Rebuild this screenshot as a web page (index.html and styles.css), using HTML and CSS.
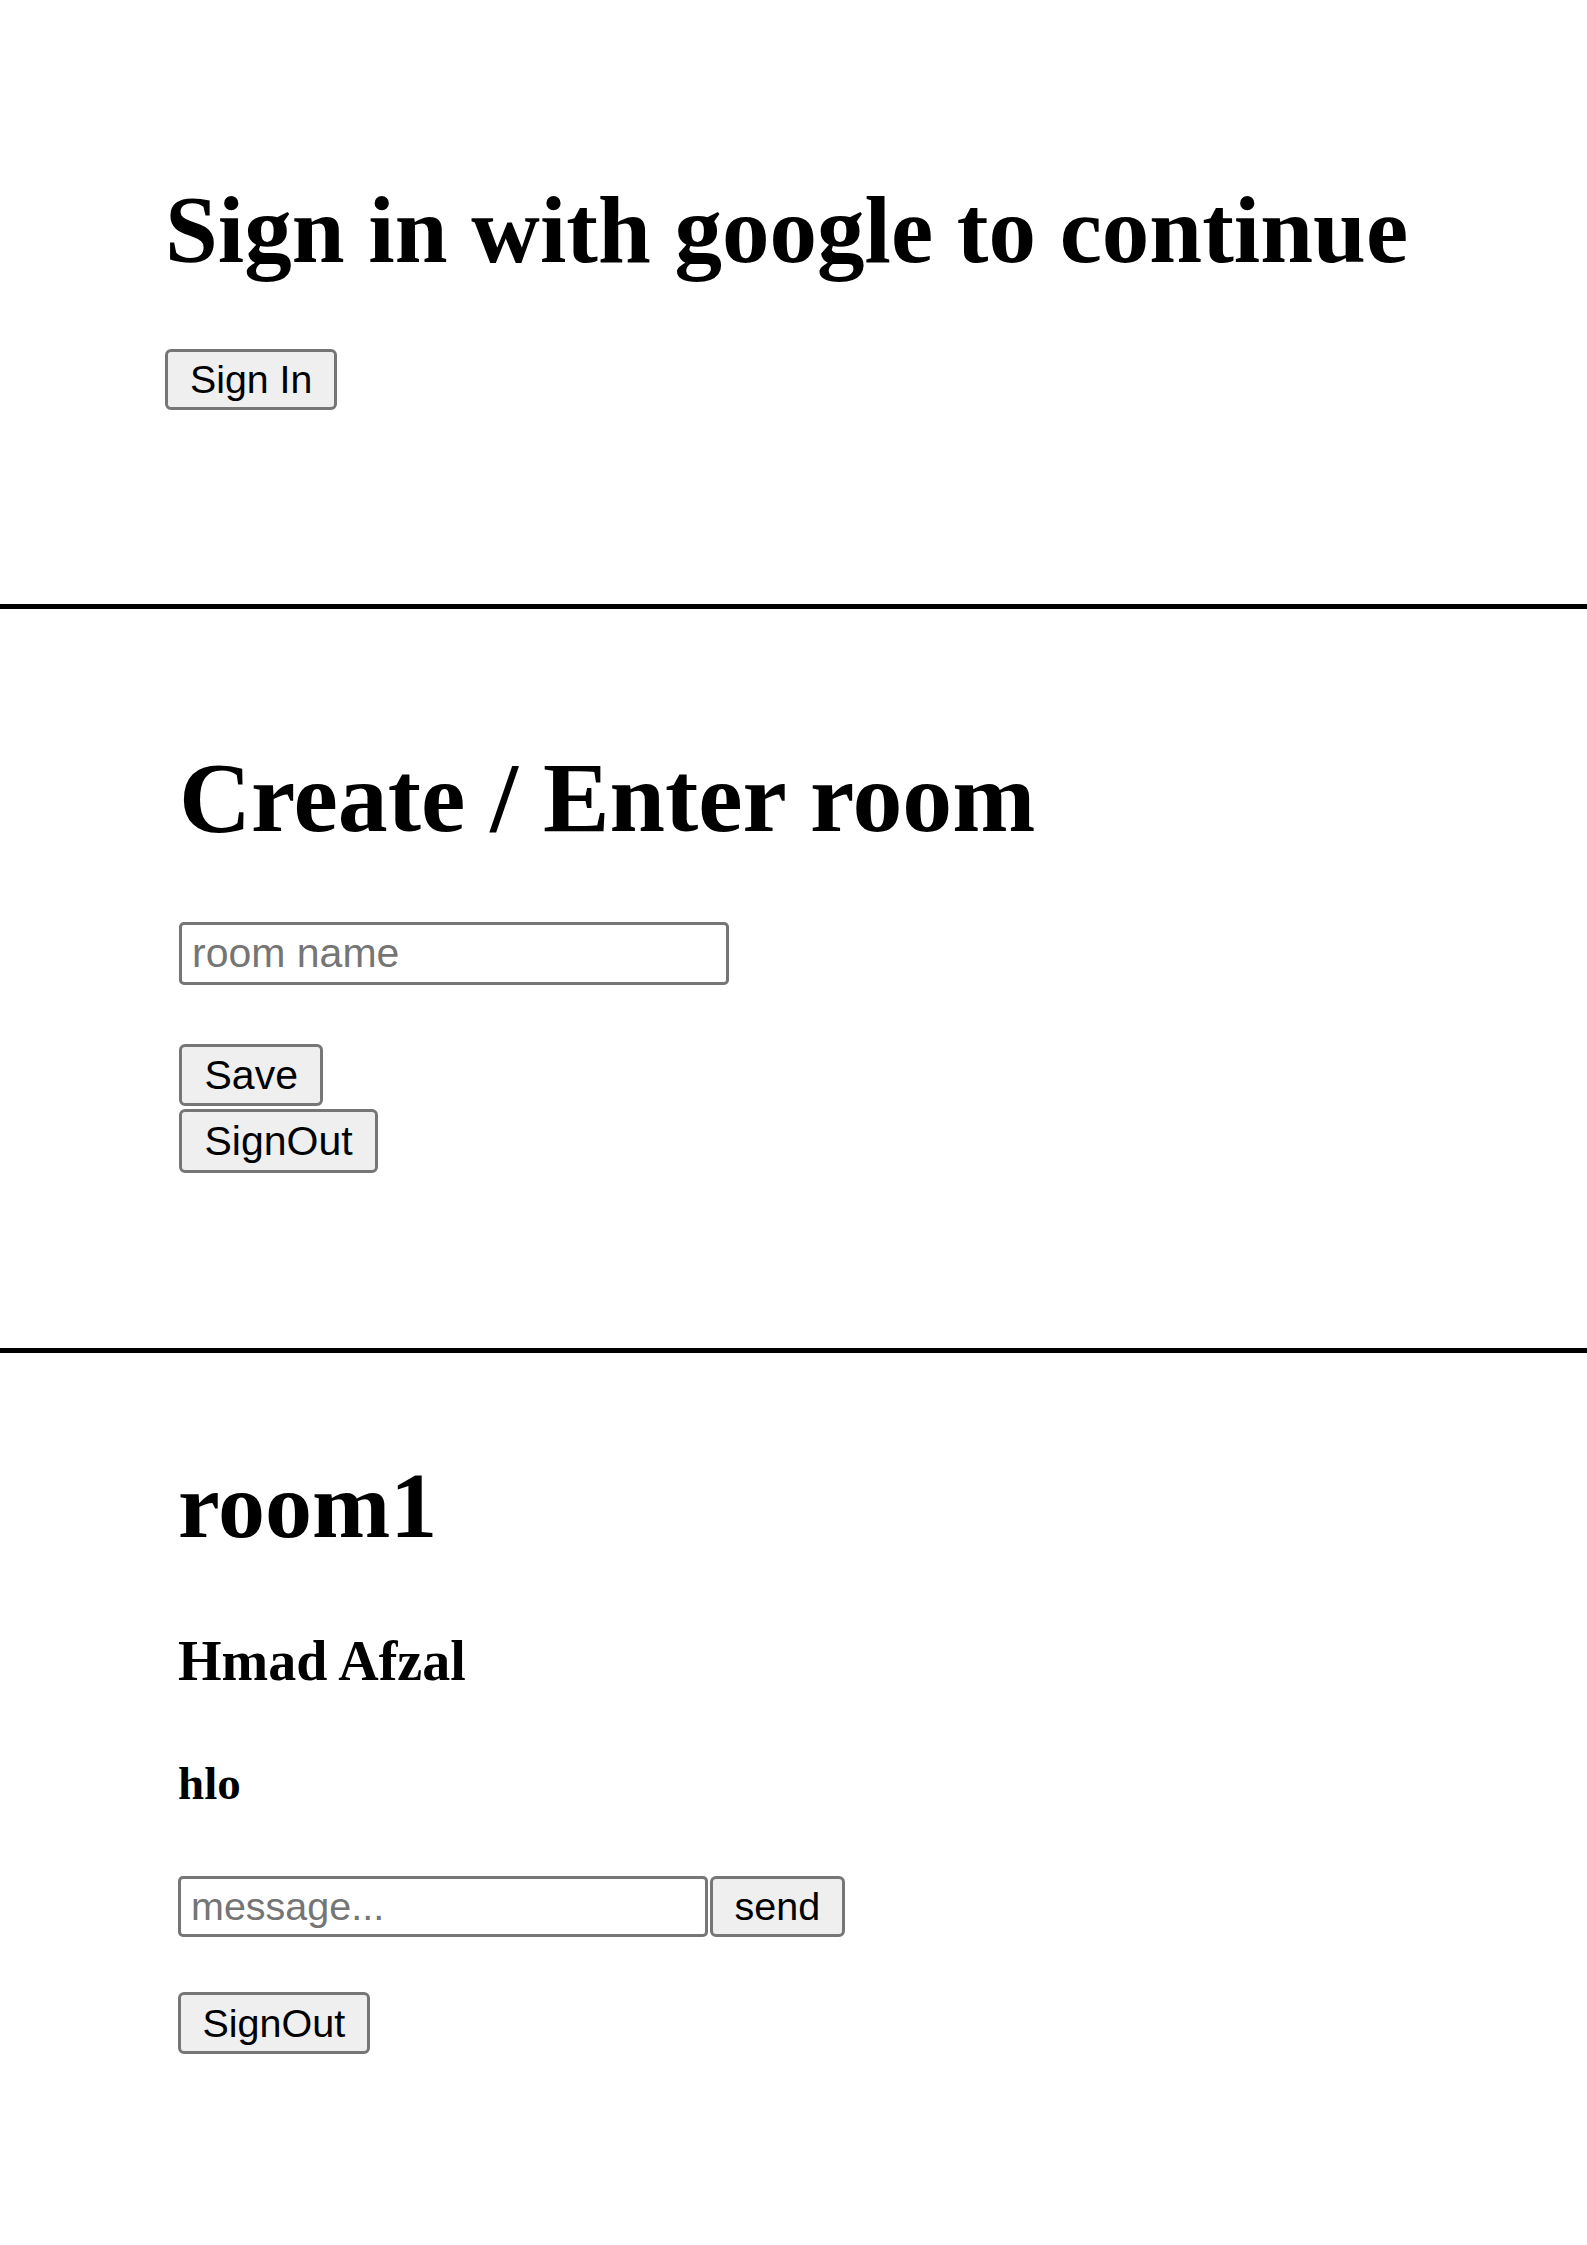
FILE: index.html
```html
<!DOCTYPE html>
<html lang="en">
<head>
<meta charset="utf-8">
<title>Chat rooms</title>
<link rel="stylesheet" href="styles.css">
</head>
<body>
  <section class="screen screen-signin">
    <h1 class="title title-signin">Sign in with google to continue</h1>
    <button class="btn btn-s1" type="button">Sign In</button>
  </section>

  <section class="screen screen-room">
    <h1 class="title title-room">Create / Enter room</h1>
    <input class="field field-room" type="text" placeholder="room name">
    <div class="stack">
      <button class="btn btn-s2 btn-save" type="button">Save</button>
      <button class="btn btn-s2 btn-out2" type="button">SignOut</button>
    </div>
  </section>

  <section class="screen screen-chat">
    <h1 class="title title-chat">room1</h1>
    <h3 class="sender">Hmad Afzal</h3>
    <h4 class="msg">hlo</h4>
    <div class="composer">
      <input class="field field-msg" type="text" placeholder="message..."><button class="btn btn-s3" type="button">send</button>
    </div>
    <button class="btn btn-s3 btn-out3" type="button">SignOut</button>
  </section>
</body>
</html>
```

FILE: styles.css
```css
html, body {
  margin: 0;
  padding: 0;
  background: #ffffff;
}

body {
  font-family: "Liberation Serif", "Times New Roman", serif;
  color: #000;
  min-height: 2245px;
}

.screen {
  display: flex;
  flex-direction: column;
  align-items: flex-start;
}

.title {
  margin: 0;
  font-weight: bold;
  color: #000;
}

/* ---- screen 1 ---- */
.screen-signin {
  padding: 176px 0 194px 165px;
  border-bottom: 5px solid #000;
}

.title-signin {
  font-size: 95px;
  line-height: 108px;
  margin-bottom: 65px;
}

/* ---- screen 2 ---- */
.screen-room {
  padding: 132px 0 175px 179px;
  border-bottom: 5px solid #000;
}

.title-room {
  font-size: 99.8px;
  line-height: 114px;
  margin-bottom: 67px;
}

.stack {
  display: flex;
  flex-direction: column;
  align-items: flex-start;
  gap: 3px;
  margin-top: 59px;
}

/* ---- screen 3 ---- */
.screen-chat {
  padding: 98px 0 0 178px;
}

.title-chat {
  font-size: 94px;
  line-height: 108px;
  margin-bottom: 70px;
}

.sender {
  margin: 0 0 63px;
  font-size: 56px;
  line-height: 64px;
  font-weight: bold;
}

.msg {
  margin: 0 0 66px;
  font-size: 47px;
  line-height: 54px;
  font-weight: bold;
}

.composer {
  display: flex;
  gap: 2px;
  margin-bottom: 55px;
}

/* ---- controls ---- */
.btn {
  box-sizing: border-box;
  font-family: "Liberation Sans", Arial, sans-serif;
  color: #000;
  background: #efefef;
  border: 3px solid #767676;
  border-radius: 6px;
  margin: 0;
  cursor: default;
}

.btn-s1 {
  font-size: 39.3px;
  height: 61px;
  padding: 0 22px;
}

.btn-s2 {
  font-size: 41px;
  padding: 0 22.5px;
}

.btn-save {
  height: 62px;
}

.btn-out2 {
  height: 64px;
}

.btn-s3 {
  font-size: 39.5px;
  height: 61px;
  padding: 0 21.5px;
}

.btn-out3 {
  height: 62px;
}

.field {
  box-sizing: border-box;
  font-family: "Liberation Sans", Arial, sans-serif;
  color: #000;
  background: #fff;
  border: 3px solid #767676;
  border-radius: 5px;
  padding: 0 10px;
  margin: 0;
  outline: none;
}

.field::placeholder {
  color: #757575;
}

.field-room {
  width: 550px;
  height: 63px;
  font-size: 41px;
}

.field-msg {
  width: 530px;
  height: 61px;
  font-size: 39.5px;
}
```
